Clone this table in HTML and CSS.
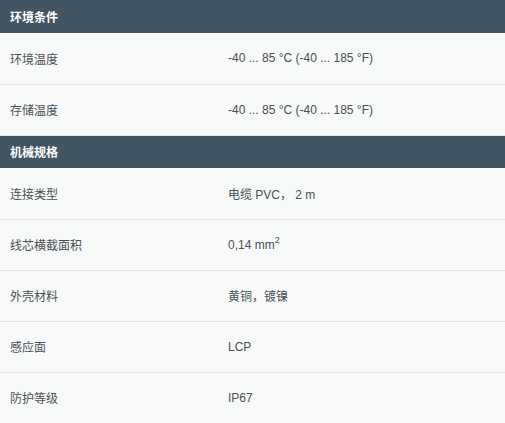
FILE: index.html
```html
<!DOCTYPE html>
<html lang="zh">
<head>
<meta charset="utf-8">
<link rel="stylesheet" href="styles.css">
</head>
<body>
<table class="spec">
  <colgroup><col class="kc"><col class="vc"></colgroup>
  <tr class="head"><th colspan="2">环境条件</th></tr>
  <tr><td class="k">环境温度</td><td class="v">-40 ... 85 °C (-40 ... 185 °F)</td></tr>
  <tr><td class="k">存储温度</td><td class="v">-40 ... 85 °C (-40 ... 185 °F)</td></tr>
  <tr class="head"><th colspan="2">机械规格</th></tr>
  <tr><td class="k">连接类型</td><td class="v">电缆 PVC， 2 m</td></tr>
  <tr><td class="k">线芯横截面积</td><td class="v">0,14 mm<sup>2</sup></td></tr>
  <tr><td class="k">外壳材料</td><td class="v">黄铜，镀镍</td></tr>
  <tr><td class="k">感应面</td><td class="v">LCP</td></tr>
  <tr><td class="k">防护等级</td><td class="v">IP67</td></tr>
</table>
</body>
</html>
```
FILE: styles.css
```css
html, body {
  margin: 0;
  padding: 0;
  background: #f8f9f9;
}
body {
  font-family: "Liberation Sans", Arial, "Noto Sans CJK SC", sans-serif;
  font-size: 12px;
  color: #4a5056;
}
.spec {
  width: 100%;
  border-collapse: collapse;
  table-layout: fixed;
}
.spec .kc {
  width: 228px;
}
.spec th {
  background: #425563;
  color: #ffffff;
  font-weight: bold;
  text-align: left;
  height: 33px;
  padding: 0 10px;
  box-sizing: border-box;
}
.spec td {
  height: 51px;
  padding: 0 10px;
  box-sizing: border-box;
  border-bottom: 1px solid #e4e6e7;
  vertical-align: middle;
}
.spec tr:last-child td {
  border-bottom: none;
}
.spec .v {
  padding-left: 0;
}
.spec sup {
  font-size: 9px;
  line-height: 0;
  vertical-align: 6px;
}
```
